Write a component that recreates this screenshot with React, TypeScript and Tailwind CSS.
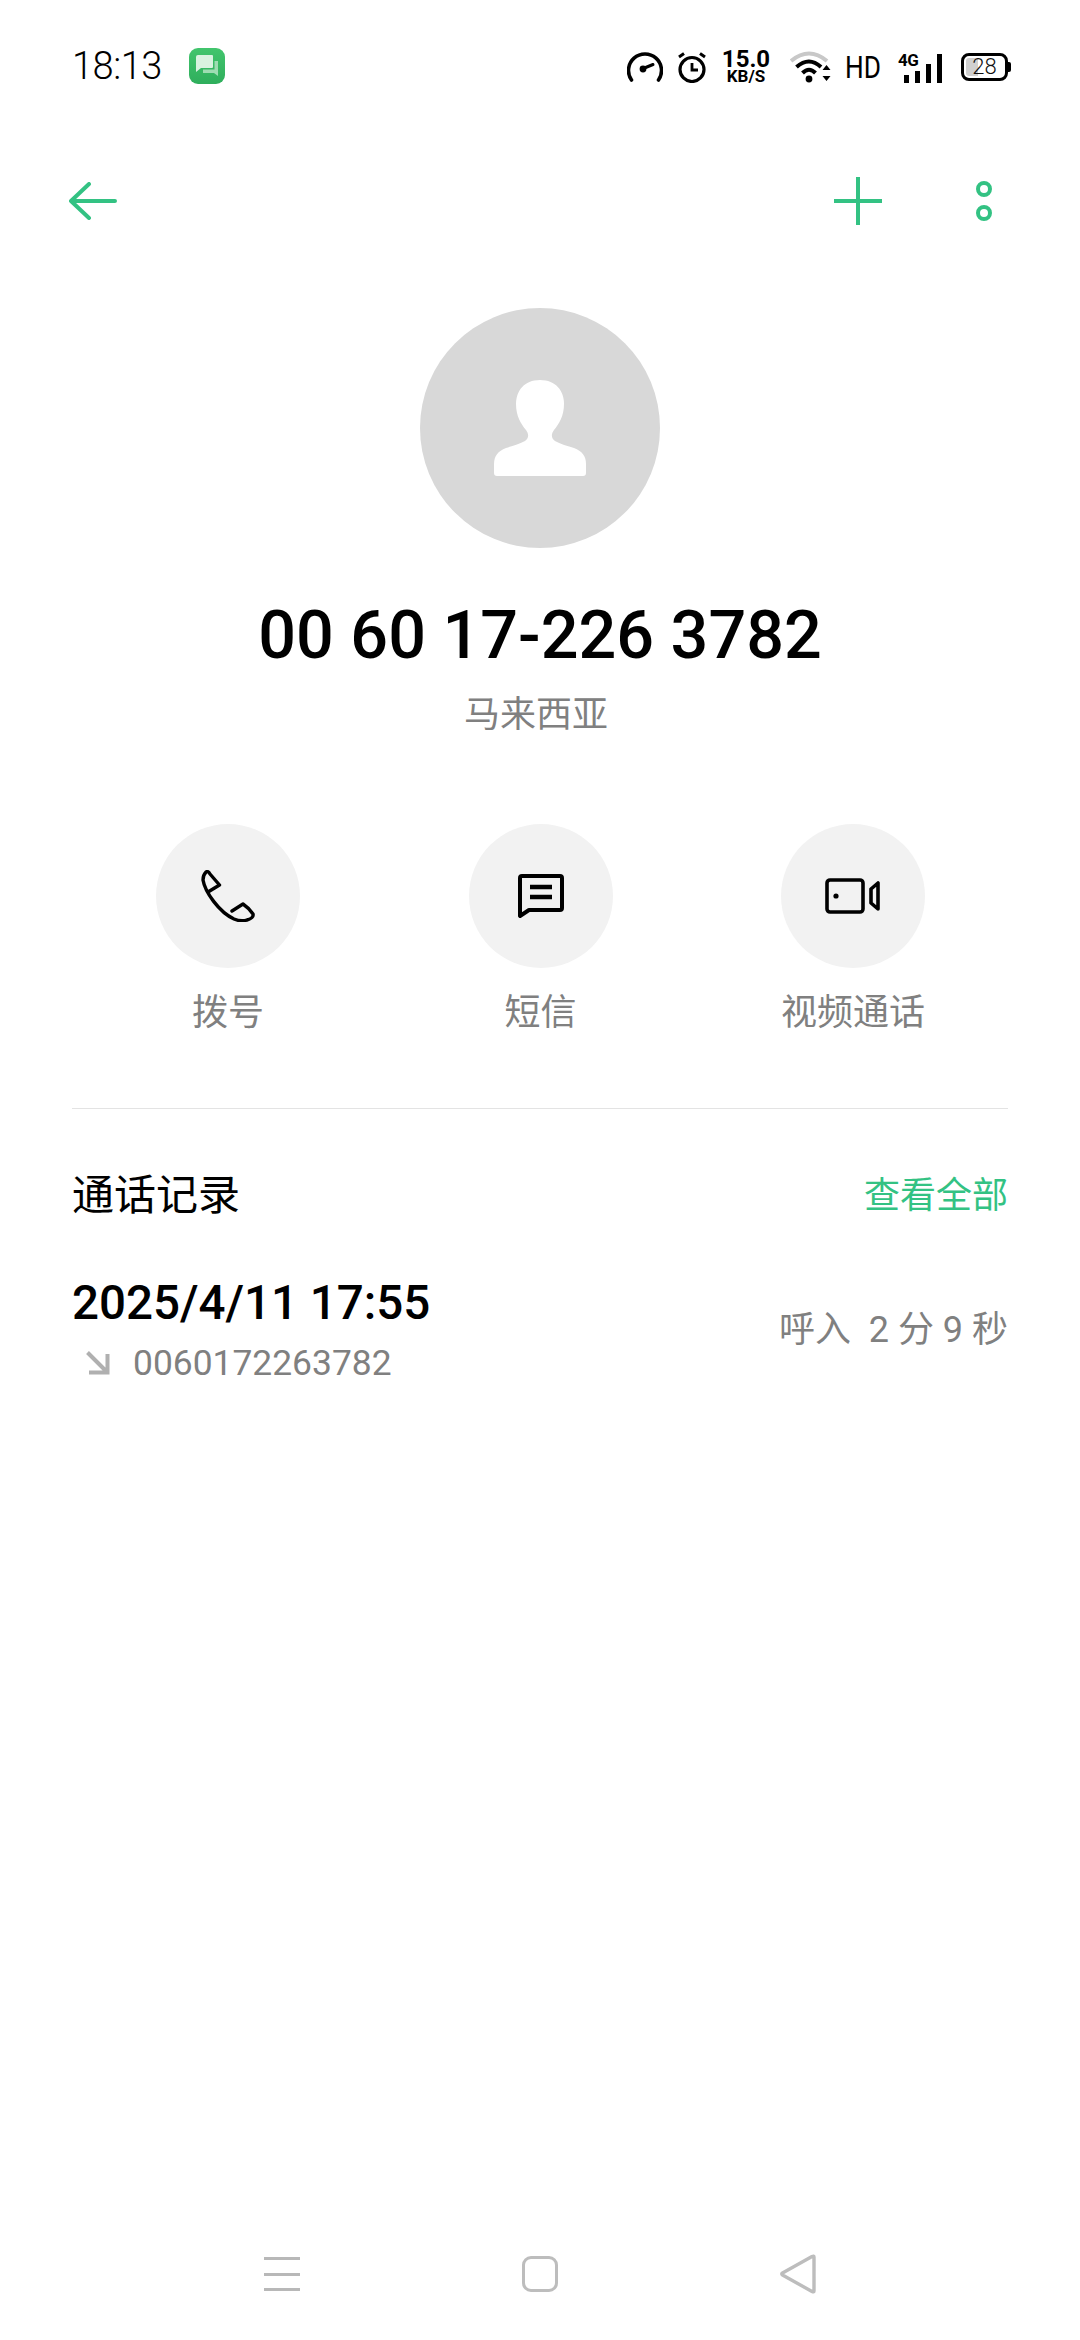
// App.tsx
const FONT = "font-['Roboto','Noto_Sans_CJK_SC',sans-serif]";

function Gauge() {
  return (
    <svg width="36" height="30" viewBox="0 0 36 30" fill="none" stroke="#000" strokeWidth="3.6">
      <path d="M4.5 28 A16.5 16.5 0 1 1 31.5 28" strokeLinecap="round" />
      <path d="M15 17 L26 12.5" strokeWidth="3" strokeLinecap="round" />
      <circle cx="16" cy="17" r="3.4" fill="#000" stroke="none" />
    </svg>
  );
}

function Alarm() {
  return (
    <svg width="30" height="31" viewBox="0 0 30 31" fill="none" stroke="#000" strokeWidth="3.2">
      <circle cx="15" cy="17.5" r="12" />
      <path d="M15 11 V18 H21" strokeWidth="2.8" />
      <path d="M2 5 L7 1.5 M28 5 L23 1.5" strokeWidth="3" />
    </svg>
  );
}

function Wifi() {
  return (
    <svg width="42" height="32" viewBox="0 0 42 32" fill="none">
      <path d="M1 10 Q19 -5 37 10" stroke="#c8c8c8" strokeWidth="4" />
      <path d="M6.5 16 Q19 5 31 16" stroke="#000" strokeWidth="4" />
      <path d="M12.5 22 Q19 15.5 25.5 22" stroke="#000" strokeWidth="4" />
      <circle cx="19" cy="28" r="3.4" fill="#000" />
      <path d="M32.5 19 L36.5 14 L40.5 19 Z M32.5 25 L36.5 30 L40.5 25 Z" fill="#000" />
    </svg>
  );
}

function Battery() {
  return (
    <div className="relative flex h-[28px] w-[50px] items-center">
      <div className="relative flex h-[28px] w-[47px] items-center justify-center overflow-hidden rounded-[8px] border-[3px] border-black">
        <div className="absolute top-[2px] bottom-[2px] left-[2px] w-[12px] rounded-l-[3px] bg-[#d0d0d0]" />
        <span className="relative text-[22px] leading-none font-light text-[#111]">28</span>
      </div>
      <div className="h-[10px] w-[3px] rounded-r-[2px] bg-black" />
    </div>
  );
}

function StatusBar() {
  return (
    <div className="flex h-[96px] items-start justify-between pr-[69px] pl-[72px]">
      <div className="flex items-center pt-[48px]">
        <span className="w-[90px] text-[38px] leading-[36px] font-light tracking-[-0.5px] text-black">18:13</span>
        <svg className="ml-[27px]" width="36" height="36" viewBox="0 0 36 36">
          <defs>
            <linearGradient id="app" x1="0" y1="0" x2="0" y2="1">
              <stop offset="0" stopColor="#42c56d" />
              <stop offset="1" stopColor="#2fae5c" />
            </linearGradient>
          </defs>
          <rect width="36" height="36" rx="9" fill="url(#app)" />
          <path d="M9 7 H23 Q24 7 24 8 V19 Q24 20 23 20 H12 L7 24 V9 Q7 7 9 7 Z" fill="#d9f2e0" />
          <path d="M25.5 13 H29 V28 L25 25 H14 V21.5 H25.5 Z" fill="#9edcb2" />
        </svg>
      </div>
      <div className="flex items-center pt-[50px]">
        <Gauge />
        <div className="ml-[14px]">
          <Alarm />
        </div>
        <div className="ml-[15px] flex w-[48px] flex-col items-center font-bold text-black">
          <span className="text-[24px] leading-[19px]">15.0</span>
          <span className="text-[17px] leading-[15px]">KB/S</span>
        </div>
        <div className="ml-[20px]">
          <Wifi />
        </div>
        <div className="ml-[13px] w-[35px]">
          <span className="block origin-left scale-x-[0.82] text-[32px] leading-[32px] text-black">HD</span>
        </div>
        <div className="relative ml-[18px] h-[32px] w-[44px]">
          <span className="absolute top-[0px] left-0 text-[17px] leading-[18px] font-bold tracking-[-0.5px] text-black">4G</span>
          <div className="absolute inset-0 flex items-end justify-end gap-[6px]">
            <div className="h-[8px] w-[5px] bg-black" />
            <div className="h-[12px] w-[5px] bg-black" />
            <div className="h-[19px] w-[5px] bg-black" />
            <div className="h-[29px] w-[5px] bg-black" />
          </div>
        </div>
        <div className="ml-[19px]">
          <Battery />
        </div>
      </div>
    </div>
  );
}

function Toolbar() {
  return (
    <div className="mt-[81px] flex h-[48px] items-center justify-between pr-[88px] pl-[69px]">
      <svg width="48" height="38" viewBox="0 0 48 38" fill="none" stroke="#33c283" strokeWidth="4" strokeLinecap="round" strokeLinejoin="round">
        <path d="M2 19 H46 M20 2 L2 19 L20 36" />
      </svg>
      <div className="flex items-center gap-[94px]">
        <svg width="48" height="48" viewBox="0 0 48 48" stroke="#33c283" strokeWidth="4">
          <path d="M24 0 V48 M0 24 H48" />
        </svg>
        <svg width="16" height="40" viewBox="0 0 16 40" fill="none" stroke="#33c283" strokeWidth="4">
          <circle cx="8" cy="8" r="6" />
          <circle cx="8" cy="32" r="6" />
        </svg>
      </div>
    </div>
  );
}

function ActionButton({ label, children }: { label: string; children: React.ReactNode }) {
  return (
    <div className="flex w-[144px] flex-col items-center">
      <div className="flex h-[144px] w-[144px] items-center justify-center rounded-full bg-[#f2f2f2]">{children}</div>
      <span className="mt-[25px] text-[36px] leading-[40px] whitespace-nowrap text-[#808080]">{label}</span>
    </div>
  );
}

export default function App() {
  return (
    <div className={`flex h-[2340px] w-[1080px] flex-col overflow-hidden bg-white ${FONT}`}>
      <StatusBar />
      <Toolbar />

      {/* Avatar */}
      <div className="mt-[83px] flex justify-center">
        <div className="flex h-[240px] w-[240px] items-center justify-center rounded-full bg-[#d8d8d8]">
          <svg width="92" height="96" viewBox="0 0 92 96" fill="#fff">
            <path d="M46 0 C30 0 22 11 22 24 C22 36 27 44 32 50 C35 54 35 58 31 61 C26 64 18 66 12 68 C4 71 0 76 0 84 V93 Q0 96 3 96 H89 Q92 96 92 93 V84 C92 76 88 71 80 68 C74 66 66 64 61 61 C57 58 57 54 60 50 C65 44 70 36 70 24 C70 11 62 0 46 0 Z" />
          </svg>
        </div>
      </div>

      <div className="mt-[49px] text-center text-[66.5px] leading-[76px] font-medium text-black">00 60 17-226 3782</div>
      <div className="mt-[20px] pr-[8px] text-center text-[36px] leading-[44px] text-[#808080]">马来西亚</div>

      {/* Actions */}
      <div className="mt-[87px] flex justify-between pr-[155px] pl-[156px]">
        <ActionButton label="拨号">
          <svg width="54" height="52" viewBox="0 0 54 52" fill="none" stroke="#000" strokeWidth="3.4" strokeLinejoin="round" strokeLinecap="round">
            <path d="M5 2 Q2 5 2 10 C4 22 18 42 33 49 Q40 52 46 50 Q53 48 52 44 Q48 38 42 34 L31 41 M5 2 Q7 0.5 9 4 L18.5 15 L7 22" />
          </svg>
        </ActionButton>
        <ActionButton label="短信">
          <svg width="46" height="44" viewBox="0 0 46 44" fill="none" stroke="#000" strokeWidth="4" strokeLinejoin="round">
            <path d="M2 4 Q2 2 4 2 H42 Q44 2 44 4 V34 Q44 36 42 36 H11 L2 42 Z" />
            <path d="M12 13 H34 M12 23 H34" strokeWidth="4.5" />
          </svg>
        </ActionButton>
        <ActionButton label="视频通话">
          <svg width="56" height="36" viewBox="0 0 56 36" fill="none" stroke="#000" strokeWidth="3.6" strokeLinejoin="round">
            <rect x="2" y="2" width="36" height="32" rx="3" />
            <circle cx="11" cy="18" r="2.6" fill="#000" stroke="none" />
            <path d="M53 5 V31 L46 25 V11 Z" />
          </svg>
        </ActionButton>
      </div>

      <div className="mx-[72px] mt-[75px] h-[1px] bg-[#e3e3e3]" />

      {/* Call log */}
      <div className="mt-[60px] flex items-center justify-between px-[72px]">
        <span className="text-[42px] leading-[54px] text-black">通话记录</span>
        <span className="text-[36px] leading-[54px] text-[#33c283]">查看全部</span>
      </div>

      <div className="mt-[52px] flex items-center justify-between px-[72px]">
        <div className="flex flex-col">
          <span className="text-[47.5px] leading-[56px] font-medium text-black">2025/4/11 17:55</span>
          <div className="mt-[10px] flex items-center">
            <svg className="ml-[14px]" width="24" height="24" viewBox="0 0 24 24" fill="none" stroke="#b0b0b0" strokeWidth="4">
              <path d="M1.5 1.5 L21 21 M3 21.5 H21.5 V3" />
            </svg>
            <span className="ml-[23px] text-[35.4px] leading-[44px] text-[#808080]">0060172263782</span>
          </div>
        </div>
        <span className="text-[36px] leading-[44px] whitespace-pre text-[#808080]">呼入  2 分 9 秒</span>
      </div>

      {/* Nav bar */}
      <div className="mt-auto mb-[46px] flex h-[40px] items-center justify-between px-[264px]">
        <div className="flex h-[34px] w-[36px] flex-col justify-between">
          <div className="h-[3px] bg-[#b8b8b8]" />
          <div className="h-[3px] bg-[#b8b8b8]" />
          <div className="h-[3px] bg-[#b8b8b8]" />
        </div>
        <div className="h-[36px] w-[36px] rounded-[9px] border-[3px] border-[#bdbdbd]" />
        <svg width="36" height="40" viewBox="0 0 36 40" fill="none" stroke="#bdbdbd" strokeWidth="3.4" strokeLinejoin="round">
          <path d="M34 3 Q34 1.5 32 2.5 L2.5 19 Q1 20 2.5 21 L32 37.5 Q34 38.5 34 37 Z" />
        </svg>
      </div>
    </div>
  );
}
